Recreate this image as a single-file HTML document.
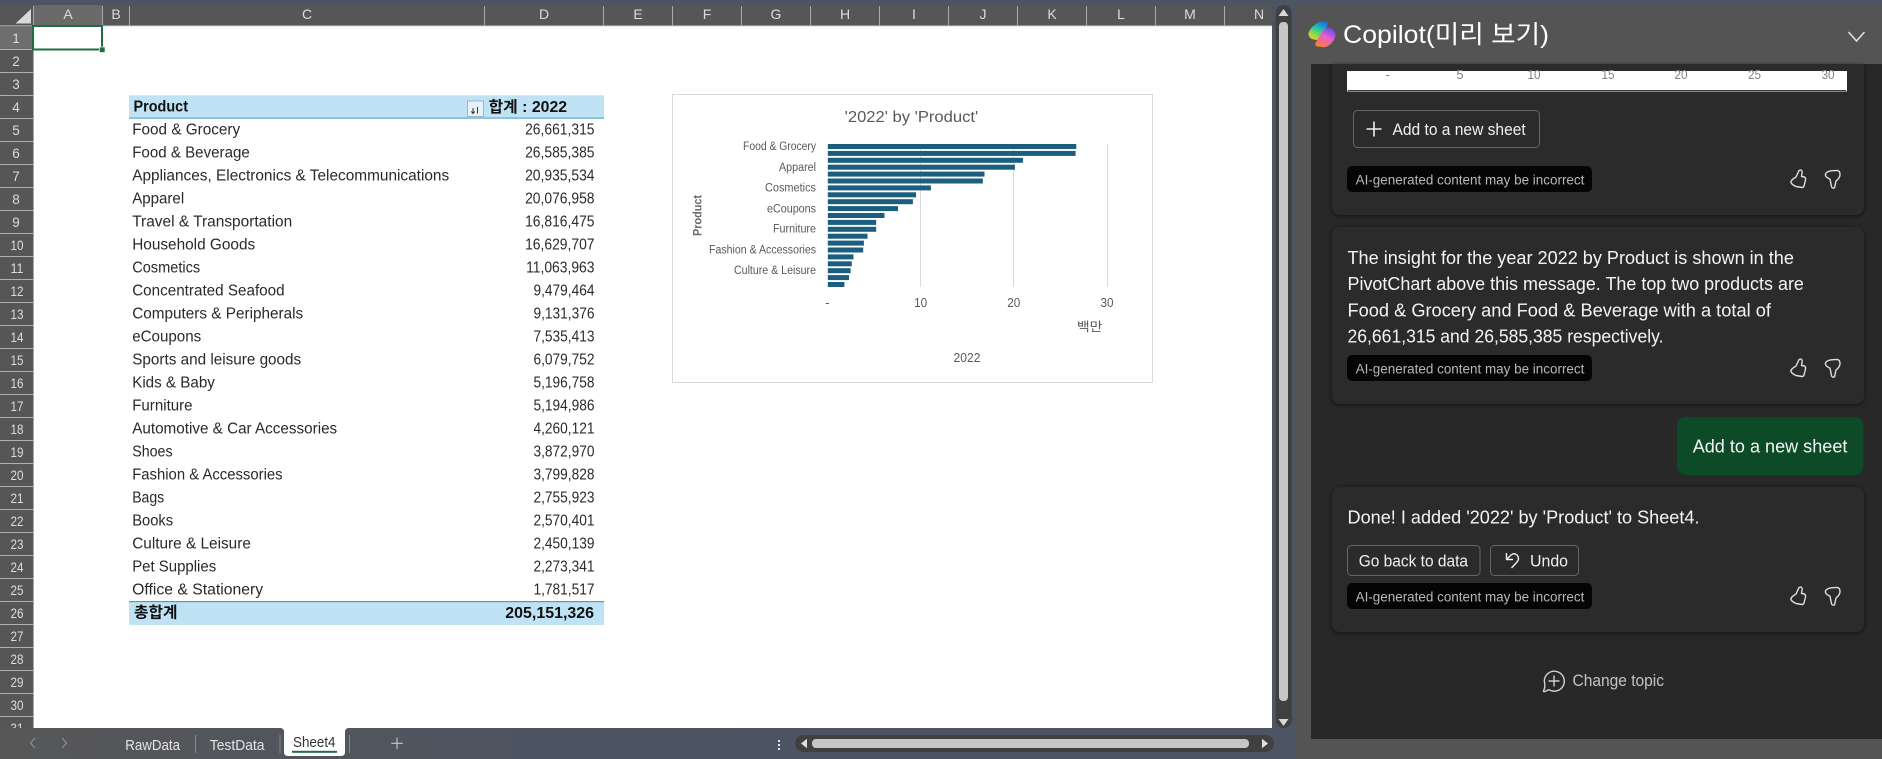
<!DOCTYPE html>
<html lang="ko"><head><meta charset="utf-8"><title>Copilot in Excel</title>
<style>
html,body{margin:0;padding:0;background:#555;width:1882px;height:759px;overflow:hidden}
svg{display:block}
text{font-family:"Liberation Sans","Noto Sans CJK KR",sans-serif;white-space:pre}
.c{font-size:15.5px;fill:#2a2a2a}
.n{font-size:15.5px;fill:#2a2a2a;text-anchor:end}
.rh{font-size:13.5px;fill:#dcdcdc;text-anchor:middle}
.ch{font-size:14px;fill:#dcdcdc;text-anchor:middle}
.cat{font-size:11.5px;fill:#595959;text-anchor:end}
.ax{font-size:12.5px;fill:#595959;text-anchor:middle}
.p{font-size:18.5px;fill:#f4f4f4}
.b{font-size:13.5px;fill:#b8b8b8}
.btn{font-size:16.5px;fill:#f0f0f0}
.tab{font-size:15px;fill:#e4e4e4}
.card{fill:#2b2b2b;filter:drop-shadow(0 1px 2px rgba(0,0,0,.55))}
</style></head><body>
<svg width="1882" height="759" viewBox="0 0 1882 759" xmlns="http://www.w3.org/2000/svg">
<defs>
<linearGradient id="bar" x1="0" x2="1" y1="0" y2="0"><stop offset="0" stop-color="#575757"/><stop offset=".45" stop-color="#4c5462"/><stop offset="1" stop-color="#4d5565"/></linearGradient>
<linearGradient id="lg1" x1="0.7" y1="0" x2="0.2" y2="1"><stop offset="0" stop-color="#1f6fe0"/><stop offset=".4" stop-color="#25c6a8"/><stop offset=".75" stop-color="#9fdc3c"/><stop offset="1" stop-color="#f5c928"/></linearGradient>
<linearGradient id="lg2" x1="0.8" y1="0" x2="0.2" y2="1"><stop offset="0" stop-color="#5a4ce8"/><stop offset=".45" stop-color="#e85ed0"/><stop offset=".8" stop-color="#f8716a"/><stop offset="1" stop-color="#f5842a"/></linearGradient>
<g id="up" fill="none" stroke="#dedede" stroke-width="1.4" stroke-linejoin="round"><path d="M6,8 L9,1.6 Q11.8,0 12.2,3 L11.5,7.5 L14.5,8 Q16,9 15.5,11 L14,17 Q13.5,18.5 12,18.5 L6,17.5 Q1.5,15.5 0.8,13 Q1,11 6,8Z"/></g>
<g id="down" fill="none" stroke="#dedede" stroke-width="1.4" stroke-linejoin="round"><path d="M0.6,3.5 Q2.5,1 8,0.7 L12.5,0.4 Q15,1 15,4.5 Q15,8 11,11 L9.6,17.6 Q8,19 6.6,17 L5,9.2 L2,7.5 Q0,6 0.6,3.5Z"/></g>
</defs>

<rect width="1882" height="759" fill="#4d5563"/>
<!-- sheet -->
<rect x="34" y="26" width="1238" height="702" fill="#ffffff"/>
<rect x="0" y="5" width="1272" height="21" fill="#565656"/>
<rect x="0" y="5" width="34" height="723" fill="#565656"/>
<rect x="34" y="5" width="68" height="21" fill="#6a6a6a"/>
<rect x="0" y="26" width="34" height="23.3" fill="#6e6e6e"/>
<path d="M15.5,23.5 L31,23.5 L31,9 Z" fill="#d9d9d9"/>
<path stroke="#a9a9a9" fill="none" d="M0,25.8H1272 M102.5,6V26 M129.5,6V26 M484.5,6V26 M603.5,6V26 M672.5,6V26 M741.5,6V26 M810.5,6V26 M879.5,6V26 M948.5,6V26 M1017.5,6V26 M1086.5,6V26 M1155.5,6V26 M1224.5,6V26 M33.5,6V728"/>
<path stroke="#b0b0b0" fill="none" d="M0,49.5H34M0,72.5H34M0,95.5H34M0,118.5H34M0,141.5H34M0,164.5H34M0,187.5H34M0,210.5H34M0,233.5H34M0,256.5H34M0,279.5H34M0,302.5H34M0,325.5H34M0,348.5H34M0,371.5H34M0,394.5H34M0,417.5H34M0,440.5H34M0,463.5H34M0,486.5H34M0,509.5H34M0,532.5H34M0,555.5H34M0,578.5H34M0,601.5H34M0,624.5H34M0,647.5H34M0,670.5H34M0,693.5H34M0,716.5H34"/>
<g>
<text class="ch" x="68" y="19">A</text><text class="ch" x="116" y="19">B</text><text class="ch" x="307" y="19">C</text><text class="ch" x="544" y="19">D</text><text class="ch" x="638" y="19">E</text><text class="ch" x="707" y="19">F</text><text class="ch" x="776" y="19">G</text><text class="ch" x="845" y="19">H</text><text class="ch" x="914" y="19">I</text><text class="ch" x="983" y="19">J</text><text class="ch" x="1052" y="19">K</text><text class="ch" x="1121" y="19">L</text><text class="ch" x="1190" y="19">M</text><text class="ch" x="1259" y="19">N</text>
</g>
<g>
<text class="rh" x="16" y="43">1</text><text class="rh" x="16" y="66">2</text><text class="rh" x="16" y="89">3</text><text class="rh" x="16" y="112">4</text><text class="rh" x="16" y="135">5</text><text class="rh" x="16" y="158">6</text><text class="rh" x="16" y="181">7</text><text class="rh" x="16" y="204">8</text><text class="rh" x="16" y="227">9</text>
<text class="rh" x="17" y="250" textLength="13" lengthAdjust="spacingAndGlyphs">10</text><text class="rh" x="17" y="273" textLength="13" lengthAdjust="spacingAndGlyphs">11</text><text class="rh" x="17" y="296" textLength="13" lengthAdjust="spacingAndGlyphs">12</text><text class="rh" x="17" y="319" textLength="13" lengthAdjust="spacingAndGlyphs">13</text><text class="rh" x="17" y="342" textLength="13" lengthAdjust="spacingAndGlyphs">14</text><text class="rh" x="17" y="365" textLength="13" lengthAdjust="spacingAndGlyphs">15</text><text class="rh" x="17" y="388" textLength="13" lengthAdjust="spacingAndGlyphs">16</text><text class="rh" x="17" y="411" textLength="13" lengthAdjust="spacingAndGlyphs">17</text><text class="rh" x="17" y="434" textLength="13" lengthAdjust="spacingAndGlyphs">18</text><text class="rh" x="17" y="457" textLength="13" lengthAdjust="spacingAndGlyphs">19</text><text class="rh" x="17" y="480" textLength="13" lengthAdjust="spacingAndGlyphs">20</text><text class="rh" x="17" y="503" textLength="13" lengthAdjust="spacingAndGlyphs">21</text><text class="rh" x="17" y="526" textLength="13" lengthAdjust="spacingAndGlyphs">22</text><text class="rh" x="17" y="549" textLength="13" lengthAdjust="spacingAndGlyphs">23</text><text class="rh" x="17" y="572" textLength="13" lengthAdjust="spacingAndGlyphs">24</text><text class="rh" x="17" y="595" textLength="13" lengthAdjust="spacingAndGlyphs">25</text><text class="rh" x="17" y="618" textLength="13" lengthAdjust="spacingAndGlyphs">26</text><text class="rh" x="17" y="641" textLength="13" lengthAdjust="spacingAndGlyphs">27</text><text class="rh" x="17" y="664" textLength="13" lengthAdjust="spacingAndGlyphs">28</text><text class="rh" x="17" y="687" textLength="13" lengthAdjust="spacingAndGlyphs">29</text><text class="rh" x="17" y="710" textLength="13" lengthAdjust="spacingAndGlyphs">30</text>
<text class="rh" x="17" y="733" textLength="13" lengthAdjust="spacingAndGlyphs">31</text>
</g>
<!-- selection -->
<rect x="33" y="26" width="69" height="23.5" fill="none" stroke="#1f6e43" stroke-width="2"/>
<rect x="99.5" y="47" width="5.5" height="5.5" fill="#1f6e43" stroke="#fff" stroke-width=".6"/>

<!-- pivot -->
<rect x="129" y="95.3" width="475" height="23" fill="#bfe3f4"/>
<rect x="129" y="117.5" width="475" height="1.2" fill="#5ba7c4"/>
<rect x="129" y="601.5" width="475" height="23.5" fill="#bfe3f4"/>
<rect x="129" y="601" width="475" height="1.2" fill="#4ba0b5"/>
<rect x="467.5" y="101" width="16" height="15.5" fill="#e6f2f9" stroke="#9fb6c4"/>
<path d="M473,108V113M471.3,111.5L473,113.5L474.7,111.5M477.5,107V113.5" stroke="#333" stroke-width="1" fill="none"/>
<g transform="translate(0,-.7)">
<text x="133.5" y="112.3" style="font-size:15.5px;font-weight:700;fill:#111" textLength="54.5" lengthAdjust="spacingAndGlyphs">Product</text>
<text x="488.6" y="112.5" style="font-size:15.5px;font-weight:700;fill:#111" textLength="78.5" lengthAdjust="spacingAndGlyphs">합계 : 2022</text>

<text class="c" x="132.2" y="135.3" textLength="108" lengthAdjust="spacingAndGlyphs">Food &amp; Grocery</text>
<text class="c" x="132.2" y="158.3" textLength="117.6" lengthAdjust="spacingAndGlyphs">Food &amp; Beverage</text>
<text class="c" x="132.2" y="181.3" textLength="317" lengthAdjust="spacingAndGlyphs">Appliances, Electronics &amp; Telecommunications</text>
<text class="c" x="132.2" y="204.3" textLength="52" lengthAdjust="spacingAndGlyphs">Apparel</text>
<text class="c" x="132.2" y="227.3" textLength="160" lengthAdjust="spacingAndGlyphs">Travel &amp; Transportation</text>
<text class="c" x="132.2" y="250.3" textLength="123" lengthAdjust="spacingAndGlyphs">Household Goods</text>
<text class="c" x="132.2" y="273.3" textLength="68" lengthAdjust="spacingAndGlyphs">Cosmetics</text>
<text class="c" x="132.2" y="296.3" textLength="152.4" lengthAdjust="spacingAndGlyphs">Concentrated Seafood</text>
<text class="c" x="132.2" y="319.3" textLength="171" lengthAdjust="spacingAndGlyphs">Computers &amp; Peripherals</text>
<text class="c" x="132.2" y="342.3" textLength="69" lengthAdjust="spacingAndGlyphs">eCoupons</text>
<text class="c" x="132.2" y="365.3" textLength="169" lengthAdjust="spacingAndGlyphs">Sports and leisure goods</text>
<text class="c" x="132.2" y="388.3" textLength="82.7" lengthAdjust="spacingAndGlyphs">Kids &amp; Baby</text>
<text class="c" x="132.2" y="411.3" textLength="60.4" lengthAdjust="spacingAndGlyphs">Furniture</text>
<text class="c" x="132.2" y="434.3" textLength="205" lengthAdjust="spacingAndGlyphs">Automotive &amp; Car Accessories</text>
<text class="c" x="132.2" y="457.3" textLength="40.4" lengthAdjust="spacingAndGlyphs">Shoes</text>
<text class="c" x="132.2" y="480.3" textLength="150.4" lengthAdjust="spacingAndGlyphs">Fashion &amp; Accessories</text>
<text class="c" x="132.2" y="503.3" textLength="32" lengthAdjust="spacingAndGlyphs">Bags</text>
<text class="c" x="132.2" y="526.3" textLength="41" lengthAdjust="spacingAndGlyphs">Books</text>
<text class="c" x="132.2" y="549.3" textLength="118.7" lengthAdjust="spacingAndGlyphs">Culture &amp; Leisure</text>
<text class="c" x="132.2" y="572.3" textLength="84" lengthAdjust="spacingAndGlyphs">Pet Supplies</text>
<text class="c" x="132.2" y="595.3" textLength="131" lengthAdjust="spacingAndGlyphs">Office &amp; Stationery</text>

<text class="n" x="594.5" y="135.3" textLength="69.4" lengthAdjust="spacingAndGlyphs">26,661,315</text>
<text class="n" x="594.5" y="158.3" textLength="69.4" lengthAdjust="spacingAndGlyphs">26,585,385</text>
<text class="n" x="594.5" y="181.3" textLength="69.4" lengthAdjust="spacingAndGlyphs">20,935,534</text>
<text class="n" x="594.5" y="204.3" textLength="69.4" lengthAdjust="spacingAndGlyphs">20,076,958</text>
<text class="n" x="594.5" y="227.3" textLength="69.4" lengthAdjust="spacingAndGlyphs">16,816,475</text>
<text class="n" x="594.5" y="250.3" textLength="69.4" lengthAdjust="spacingAndGlyphs">16,629,707</text>
<text class="n" x="594.5" y="273.3" textLength="68.4" lengthAdjust="spacingAndGlyphs">11,063,963</text>
<text class="n" x="594.5" y="296.3" textLength="61" lengthAdjust="spacingAndGlyphs">9,479,464</text>
<text class="n" x="594.5" y="319.3" textLength="61" lengthAdjust="spacingAndGlyphs">9,131,376</text>
<text class="n" x="594.5" y="342.3" textLength="61" lengthAdjust="spacingAndGlyphs">7,535,413</text>
<text class="n" x="594.5" y="365.3" textLength="61" lengthAdjust="spacingAndGlyphs">6,079,752</text>
<text class="n" x="594.5" y="388.3" textLength="61" lengthAdjust="spacingAndGlyphs">5,196,758</text>
<text class="n" x="594.5" y="411.3" textLength="61" lengthAdjust="spacingAndGlyphs">5,194,986</text>
<text class="n" x="594.5" y="434.3" textLength="61" lengthAdjust="spacingAndGlyphs">4,260,121</text>
<text class="n" x="594.5" y="457.3" textLength="61" lengthAdjust="spacingAndGlyphs">3,872,970</text>
<text class="n" x="594.5" y="480.3" textLength="61" lengthAdjust="spacingAndGlyphs">3,799,828</text>
<text class="n" x="594.5" y="503.3" textLength="61" lengthAdjust="spacingAndGlyphs">2,755,923</text>
<text class="n" x="594.5" y="526.3" textLength="61" lengthAdjust="spacingAndGlyphs">2,570,401</text>
<text class="n" x="594.5" y="549.3" textLength="61" lengthAdjust="spacingAndGlyphs">2,450,139</text>
<text class="n" x="594.5" y="572.3" textLength="61" lengthAdjust="spacingAndGlyphs">2,273,341</text>
<text class="n" x="594.5" y="595.3" textLength="61" lengthAdjust="spacingAndGlyphs">1,781,517</text>
<text x="134" y="618.3" style="font-size:15.5px;font-weight:700;fill:#111" textLength="43.5" lengthAdjust="spacingAndGlyphs">총합계</text>
<text x="594" y="618.5" style="font-size:15.5px;font-weight:700;fill:#111;text-anchor:end" textLength="88.7" lengthAdjust="spacingAndGlyphs">205,151,326</text>
</g>

<!-- chart -->
<rect x="672.5" y="94.5" width="480" height="288" fill="#fff" stroke="#d9d9d9"/>
<text x="844.7" y="122" style="font-size:16px;fill:#595959" textLength="133.5" lengthAdjust="spacingAndGlyphs">'2022' by 'Product'</text>
<path stroke="#d9d9d9" d="M920.5,144V287M1013.5,144V287M1107.5,144V287"/>
<g fill="#1b5e7d">
<rect x="827.8" y="144" width="248.5" height="5"/><rect x="827.8" y="150.9" width="247.8" height="5"/><rect x="827.8" y="157.8" width="195.1" height="5"/><rect x="827.8" y="164.7" width="187.1" height="5"/><rect x="827.8" y="171.6" width="156.7" height="5"/><rect x="827.8" y="178.5" width="155" height="5"/><rect x="827.8" y="185.4" width="103.1" height="5"/><rect x="827.8" y="192.3" width="88.3" height="5"/><rect x="827.8" y="199.2" width="85.1" height="5"/><rect x="827.8" y="206.1" width="70.2" height="5"/><rect x="827.8" y="213" width="56.7" height="5"/><rect x="827.8" y="219.9" width="48.4" height="5"/><rect x="827.8" y="226.8" width="48.4" height="5"/><rect x="827.8" y="233.7" width="39.7" height="5"/><rect x="827.8" y="240.6" width="36.1" height="5"/><rect x="827.8" y="247.5" width="35.4" height="5"/><rect x="827.8" y="254.4" width="25.7" height="5"/><rect x="827.8" y="261.3" width="24" height="5"/><rect x="827.8" y="268.2" width="22.8" height="5"/><rect x="827.8" y="275.1" width="21.2" height="5"/><rect x="827.8" y="282" width="16.6" height="5"/>
</g>
<text class="cat" x="816" y="150" textLength="73" lengthAdjust="spacingAndGlyphs">Food &amp; Grocery</text>
<text class="cat" x="816" y="171" textLength="37" lengthAdjust="spacingAndGlyphs">Apparel</text>
<text class="cat" x="816" y="191.3" textLength="51" lengthAdjust="spacingAndGlyphs">Cosmetics</text>
<text class="cat" x="816" y="212.3" textLength="49" lengthAdjust="spacingAndGlyphs">eCoupons</text>
<text class="cat" x="816" y="232.3" textLength="43" lengthAdjust="spacingAndGlyphs">Furniture</text>
<text class="cat" x="816" y="253.3" textLength="107" lengthAdjust="spacingAndGlyphs">Fashion &amp; Accessories</text>
<text class="cat" x="816" y="274" textLength="82" lengthAdjust="spacingAndGlyphs">Culture &amp; Leisure</text>
<text x="0" y="0" transform="translate(701.5,236) rotate(-90)" style="font-size:11.5px;font-weight:700;fill:#6a6a6a" textLength="41" lengthAdjust="spacingAndGlyphs">Product</text>
<text class="ax" x="827.3" y="307">-</text><text class="ax" x="920.6" y="307" textLength="13" lengthAdjust="spacingAndGlyphs">10</text><text class="ax" x="1013.8" y="307" textLength="13" lengthAdjust="spacingAndGlyphs">20</text><text class="ax" x="1107" y="307" textLength="13" lengthAdjust="spacingAndGlyphs">30</text>
<text class="ax" x="1089.7" y="331" textLength="25.6" lengthAdjust="spacingAndGlyphs">백만</text>
<text class="ax" x="967" y="362" textLength="27" lengthAdjust="spacingAndGlyphs">2022</text>

<!-- bottom tab bar -->
<rect x="0" y="728" width="1295" height="31" fill="url(#bar)"/>
<path d="M35,738L30.5,743L35,748M62,738L66.5,743L62,748" stroke="#8c8c8c" stroke-width="1.3" fill="none"/>
<text class="tab" x="125.3" y="749.8" textLength="54.7" lengthAdjust="spacingAndGlyphs">RawData</text>
<rect x="195" y="735" width="1" height="18" fill="#8a8a8a"/>
<text class="tab" x="209.8" y="749.8" textLength="54.7" lengthAdjust="spacingAndGlyphs">TestData</text>
<rect x="279.5" y="735" width="1" height="18" fill="#8a8a8a"/>
<path d="M280,728 Q284,728 284,732 V752 Q284,756 288,756 H341 Q345,756 345,752 V732 Q345,728 349,728 Z" fill="#fff"/>
<text x="293" y="747" style="font-size:15px;fill:#333" textLength="42.5" lengthAdjust="spacingAndGlyphs">Sheet4</text>
<rect x="292" y="750.8" width="45" height="2" fill="#1f6e43"/>
<rect x="349" y="735" width="1" height="18" fill="#8a8a8a"/>
<path d="M397,737.5V749M391.3,743.3H402.7" stroke="#c8c8c8" stroke-width="1.1" fill="none"/>
<g fill="#e8e8e8"><rect x="778" y="740" width="2" height="2"/><rect x="778" y="744" width="2" height="2"/><rect x="778" y="748" width="2" height="2"/></g>
<rect x="795" y="735" width="479" height="17" rx="8.5" fill="#404040"/>
<rect x="812" y="739" width="437" height="9" rx="4" fill="#c6c6c6"/>
<path d="M807,738.8L801,743.5L807,748.2Z M1262,738.8L1268,743.5L1262,748.2Z" fill="#e0e0e0"/>

<!-- vertical scrollbar -->
<rect x="1275.7" y="5" width="16" height="723" rx="8" fill="#404040"/>
<rect x="1279" y="22" width="9" height="679" rx="4" fill="#c6c6c6"/>
<path d="M1283.5,9L1278.5,16H1288.5Z M1283.5,726L1278.5,719H1288.5Z" fill="#d8d8d8"/>

<!-- copilot panel -->
<rect x="1295" y="6" width="587" height="753" fill="#545454"/>
<rect x="1311" y="64" width="571" height="675" fill="#282828"/>
<path d="M1316,24 Q1318,21.5 1322,21.5 L1326,21.5 Q1328.5,22 1327.5,25 L1322,37 Q1320,40 1316,40 L1312,39 Q1308,37 1308.5,33 Q1310,28 1316,24Z" fill="url(#lg1)"/>
<path d="M1330,28 Q1336,30 1335.5,36 Q1334,42 1328,46 Q1326,47.5 1322,47 L1317,46.5 Q1314,45 1316,42 L1322,32 Q1325,27 1330,28Z" fill="url(#lg2)"/>
<text x="1343" y="43" style="font-size:25px;fill:#fff" textLength="206" lengthAdjust="spacingAndGlyphs">Copilot(미리 보기)</text>
<path d="M1848.5,32L1856.5,41L1864.5,32" stroke="#e4e4e4" stroke-width="1.5" fill="none"/>

<!-- card 1 -->
<path d="M1332,64H1864V207a8,8 0 0 1-8,8H1340a8,8 0 0 1-8-8Z" class="card"/>
<path d="M1347,71H1847V90a2,2 0 0 1-2,2H1349a2,2 0 0 1-2-2Z" fill="#fff"/>
<path d="M1348,90.8H1846" stroke="#3c3c3c" stroke-width="1.6" fill="none"/>
<g style="font-size:13px;fill:#808080;text-anchor:middle">
<text x="1387.5" y="79">-</text><text x="1460" y="79">5</text><text x="1534" y="79" textLength="13" lengthAdjust="spacingAndGlyphs">10</text><text x="1608" y="79" textLength="13" lengthAdjust="spacingAndGlyphs">15</text><text x="1681" y="79" textLength="13" lengthAdjust="spacingAndGlyphs">20</text><text x="1754.5" y="79" textLength="13" lengthAdjust="spacingAndGlyphs">25</text><text x="1828" y="79" textLength="13" lengthAdjust="spacingAndGlyphs">30</text>
</g>
<rect x="1353.5" y="110.5" width="186" height="37" rx="4" fill="none" stroke="#666"/>
<path d="M1374,121.5V136.5M1366.5,129H1381.5" stroke="#f0f0f0" stroke-width="1.6" fill="none"/>
<text class="btn" x="1392.5" y="135" textLength="133.2" lengthAdjust="spacingAndGlyphs">Add to a new sheet</text>
<rect x="1347" y="166" width="245" height="26" rx="5" fill="#050505"/>
<text class="b" x="1355.6" y="184.3" textLength="228.8" lengthAdjust="spacingAndGlyphs">AI-generated content may be incorrect</text>
<use href="#up" x="1790" y="169"/><use href="#down" x="1825" y="170"/>

<!-- card 2 -->
<rect class="card" x="1332" y="227" width="532" height="177" rx="8"/>
<text class="p" x="1347.5" y="264" textLength="446.4" lengthAdjust="spacingAndGlyphs">The insight for the year 2022 by Product is shown in the</text>
<text class="p" x="1347.5" y="290" textLength="456.4" lengthAdjust="spacingAndGlyphs">PivotChart above this message. The top two products are</text>
<text class="p" x="1347.5" y="316.3" textLength="423.4" lengthAdjust="spacingAndGlyphs">Food &amp; Grocery and Food &amp; Beverage with a total of</text>
<text class="p" x="1347.5" y="342.5" textLength="316" lengthAdjust="spacingAndGlyphs">26,661,315 and 26,585,385 respectively.</text>
<rect x="1347" y="355" width="245" height="26" rx="5" fill="#050505"/>
<text class="b" x="1355.6" y="373.3" textLength="228.8" lengthAdjust="spacingAndGlyphs">AI-generated content may be incorrect</text>
<use href="#up" x="1790" y="358"/><use href="#down" x="1825" y="359"/>

<!-- bubble -->
<rect x="1677" y="417" width="186.5" height="58" rx="9" fill="#0d4a27"/>
<text class="p" x="1692.7" y="452.7" textLength="154.7" lengthAdjust="spacingAndGlyphs">Add to a new sheet</text>

<!-- card 3 -->
<rect class="card" x="1332" y="487" width="532" height="145" rx="8"/>
<text class="p" x="1347.5" y="523.3" textLength="352" lengthAdjust="spacingAndGlyphs">Done! I added '2022' by 'Product' to Sheet4.</text>
<rect x="1347.5" y="545.5" width="132.5" height="30" rx="4" fill="none" stroke="#666"/>
<text class="btn" x="1358.7" y="566.3" textLength="109.3" lengthAdjust="spacingAndGlyphs">Go back to data</text>
<rect x="1490.5" y="545.5" width="88" height="30" rx="4" fill="none" stroke="#666"/>
<path d="M1506.5,553V559.5H1513M1506.5,559.5L1511,555Q1514,552.5 1517,555Q1520,558.5 1517,562L1511.5,568" stroke="#efefef" stroke-width="1.4" fill="none" stroke-linejoin="round"/>
<text class="btn" x="1530" y="566.3" textLength="38" lengthAdjust="spacingAndGlyphs">Undo</text>
<rect x="1347" y="583" width="245" height="26" rx="5" fill="#050505"/>
<text class="b" x="1355.6" y="601.3" textLength="228.8" lengthAdjust="spacingAndGlyphs">AI-generated content may be incorrect</text>
<use href="#up" x="1790" y="586"/><use href="#down" x="1825" y="587"/>

<!-- change topic -->
<path d="M1544.3,681A10,10 0 1 1 1549,689.7L1544.5,691.6Q1543,692 1543.8,690.2Q1545.6,687.2 1544.3,681Z" fill="none" stroke="#d0d0d0" stroke-width="1.4" stroke-linejoin="round"/>
<path d="M1554,675.5V686.5M1548.5,681H1559.5" stroke="#d0d0d0" stroke-width="1.4" fill="none"/>
<text x="1572.5" y="686.2" style="font-size:16.5px;fill:#c4c4c4" textLength="91.5" lengthAdjust="spacingAndGlyphs">Change topic</text>
</svg>
</body></html>
